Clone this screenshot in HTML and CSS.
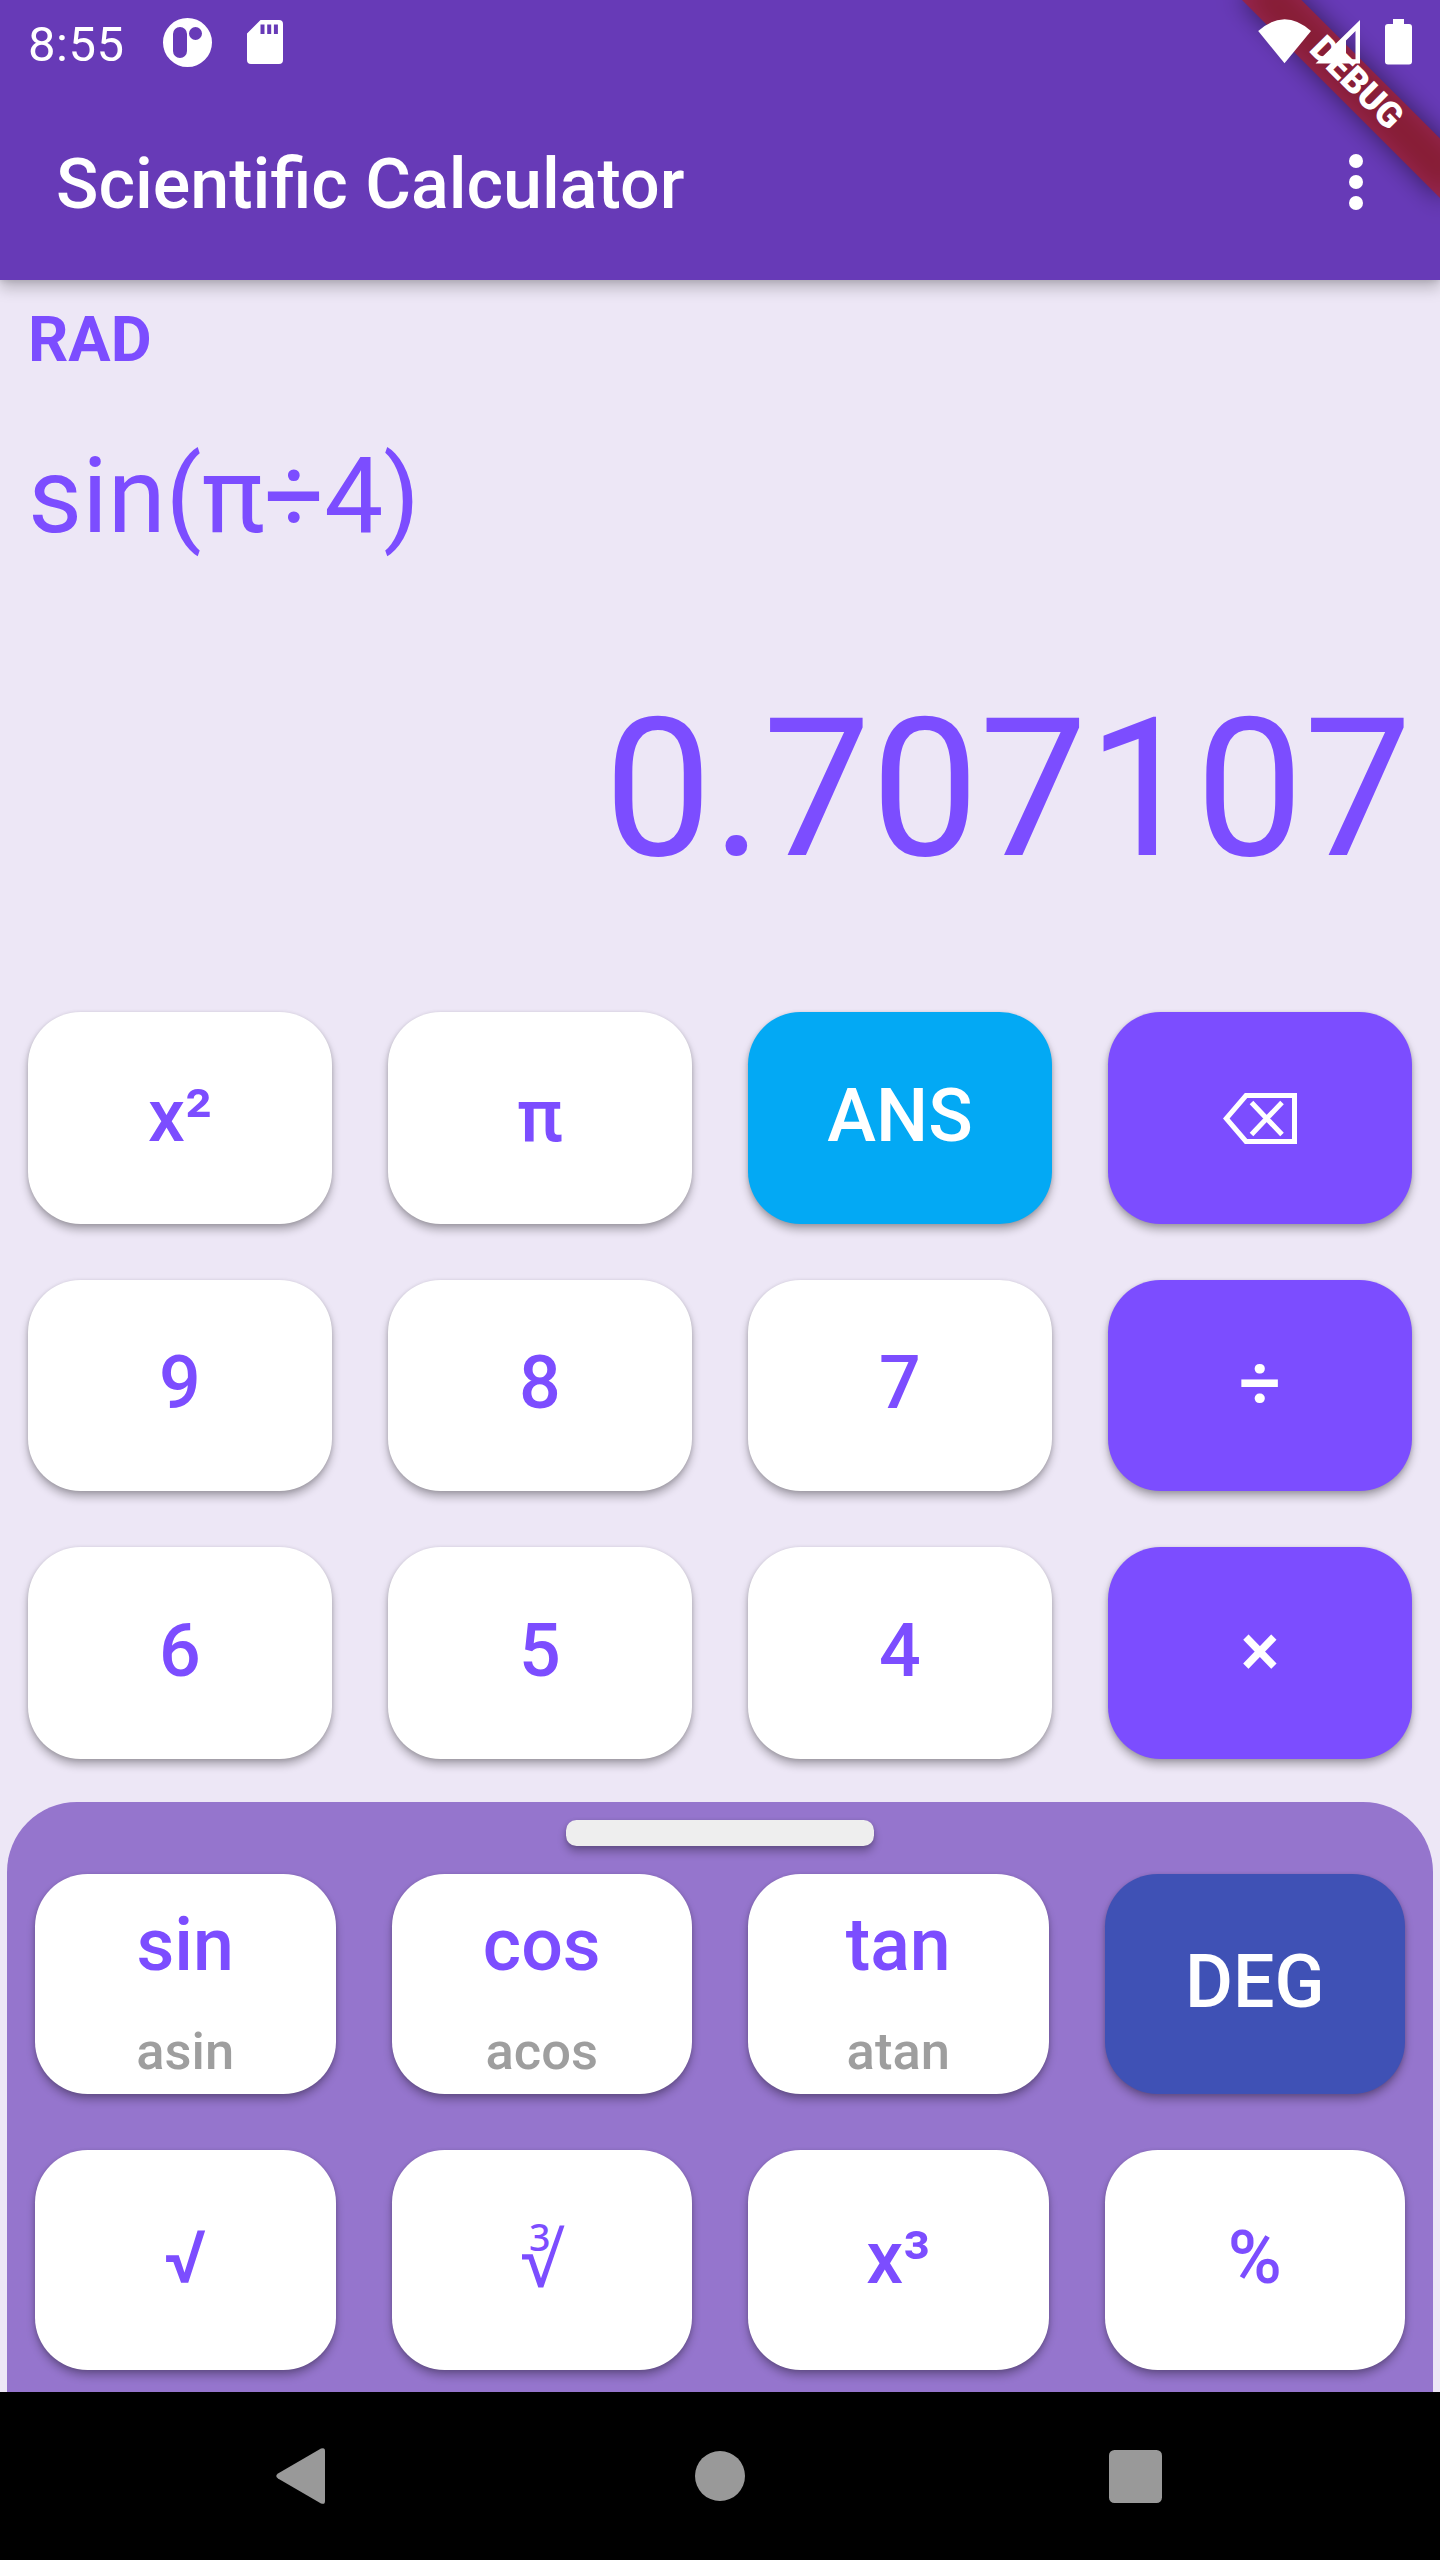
FILE: index.html
```html
<!DOCTYPE html>
<html lang="en">
<head>
<meta charset="utf-8">
<title>Scientific Calculator</title>
<link rel="stylesheet" href="styles.css">
</head>
<body>
<div class="screen">
  <header class="top">
    <div class="status">
      <span class="clock">8:55</span>
      <svg class="status-app" width="49" height="49" viewBox="0 0 49 49"><path fill="#fff" fill-rule="evenodd" d="M24.5 0a24.5 24.5 0 1 1 0 49a24.5 24.5 0 1 1 0-49zM17 9a7 7 0 0 0-7 7v17a7 7 0 0 0 14 0V16a7 7 0 0 0-7-7zM32.500 9a6.500 6.500 0 1 0 0 13a6.500 6.500 0 1 0 0-13z"/></svg>
      <svg class="status-sd" width="36" height="44" viewBox="0 0 36 44"><path fill="#fff" fill-rule="evenodd" d="M13.500 0H32a4 4 0 0 1 4 4V40a4 4 0 0 1-4 4H4a4 4 0 0 1-4-4V13.500zM13.500 4.500V14h4V4.500zM20.200 4.500V14h4V4.500zM26.900 4.500V14h4V4.500z"/></svg>
    </div>
    <div class="appbar">
      <h1 class="title">Scientific Calculator</h1>
      <svg class="more" width="14" height="56" viewBox="0 0 14 56"><g fill="#fff"><circle cx="7" cy="7" r="7"/><circle cx="7" cy="28" r="7"/><circle cx="7" cy="49" r="7"/></g></svg>
    </div>
  </header>
  <section class="display">
    <div class="mode">RAD</div>
    <div class="expression">sin(π÷4)</div>
    <div class="result">0.707107</div>
  </section>
  <main class="keypad">
    <button class="key">x²</button>
    <button class="key">π</button>
    <button class="key answer">ANS</button>
    <button class="key operator" aria-label="Backspace"><svg class="backspace" width="74" height="51" viewBox="0 0 74 51"><path fill="none" stroke="#fff" stroke-width="5" d="M23 2.500H71.500V48.500H23L3.200 25.500zM28.500 9.500L59 41.500M59 9.500L28.500 41.500"/></svg></button>
    <button class="key">9</button>
    <button class="key">8</button>
    <button class="key">7</button>
    <button class="key operator">÷</button>
    <button class="key">6</button>
    <button class="key">5</button>
    <button class="key">4</button>
    <button class="key operator">×</button>
  </main>
  <section class="sheet">
    <div class="handle"></div>
    <div class="functions">
      <button class="key dual"><span>sin</span><span class="alt">asin</span></button>
      <button class="key dual"><span>cos</span><span class="alt">acos</span></button>
      <button class="key dual"><span>tan</span><span class="alt">atan</span></button>
      <button class="key degrees">DEG</button>
      <button class="key">√</button>
      <button class="key cube-root"><svg class="root" width="43" height="64" viewBox="0 0 43 64"><path fill="currentColor" d="M0 30.200H10.700L19 54.200L37.700 1.500H42.500L21.300 63.500H16.300L6.700 35.500H0z"/><text class="root-index" x="17.700" y="27" text-anchor="middle">3</text></svg></button>
      <button class="key">x³</button>
      <button class="key">%</button>
    </div>
  </section>
  <nav class="navbar">
    <svg width="49" height="56" viewBox="0 0 49 56"><path fill="#999" d="M45 .6Q49-1 49 3V53Q49 57 45 55.400L2 30.500Q-1.500 28 2 25.500z"/></svg>
    <svg class="home" width="50" height="50" viewBox="0 0 50 50"><circle cx="25" cy="25" r="25" fill="#999"/></svg>
    <svg width="53" height="53" viewBox="0 0 53 53"><rect width="53" height="53" rx="5.500" fill="#999"/></svg>
  </nav>
  <svg class="banner" width="300" height="280" viewBox="0 0 300 280">
    <defs><filter id="soft" x="-30%" y="-150%" width="160%" height="400%"><feGaussianBlur stdDeviation="12.600"/></filter></defs>
    <g transform="translate(300 0) rotate(45)">
      <rect x="-140" y="98" width="280" height="42" fill="#000" fill-opacity=".5" filter="url(#soft)"/>
      <rect x="-140" y="98" width="280" height="42" fill="#b71c1c" fill-opacity=".627"/>
      <text class="banner-text" x="-.300" y="129.300" text-anchor="middle">DEBUG</text>
    </g>
    <path fill="#fff" d="M118.200 31Q144.500 7.500 171 31L144.500 63.200z"/>
    <path fill="#fff" fill-rule="evenodd" d="M220 20V63.500H175.500zM215.500 31V59.300H206V40.500z"/>
    <path fill="#fff" d="M253 19H264V24H269A3 3 0 0 1 272 27V61.500A3 3 0 0 1 269 64.500H248A3 3 0 0 1 245 61.500V27A3 3 0 0 1 248 24H253z"/>
  </svg>
</div>
</body>
</html>
```
FILE: styles.css
```css
* { box-sizing: border-box; }
body { margin: 0; background: #ede7f6; font-family: Roboto, "Noto Sans", sans-serif; }
.screen {
  position: relative;
  display: flex;
  flex-direction: column;
  width: 1440px;
  height: 2560px;
  overflow: hidden;
  background: #ede7f6;
}
.top {
  height: 280px;
  background: #673ab7;
  color: #fff;
  box-shadow: 0 8px 14px rgba(0, 0, 0, .22), 0 1px 6px rgba(0, 0, 0, .12);
}
.status { display: flex; align-items: center; height: 84px; padding-left: 28px; }
.clock { width: 135px; padding-top: 5px; font-size: 49px; line-height: 60px; letter-spacing: .5px; }
.status-sd { margin-left: 35px; }
.appbar { display: flex; align-items: center; justify-content: space-between; height: 196px; padding: 0 77px 0 56px; }
.title { margin: 0; padding-top: 4px; font-size: 70px; font-weight: 500; line-height: 82px; }
.display { display: flex; flex-direction: column; height: 732px; padding: 23px 28px 0; color: #7c4dff; }
.mode { font-size: 63px; font-weight: 700; line-height: 74px; }
.expression { margin-top: 58px; font-size: 105px; line-height: 123px; }
.result { margin-top: 118px; font-size: 192.500px; line-height: 226px; text-align: right; }
.keypad {
  display: grid;
  grid-template-columns: repeat(4, 1fr);
  grid-auto-rows: 211.500px;
  gap: 56px;
  height: 790px;
  padding: 0 28px;
}
.key {
  display: flex;
  flex-direction: column;
  align-items: center;
  justify-content: center;
  padding: 0 0 4px;
  border: 0;
  border-radius: 52.500px;
  background: #fff;
  color: #7c4dff;
  font: 500 73.500px/86px Roboto, "Noto Sans", sans-serif;
  box-shadow: 0 6px 9px rgba(0, 0, 0, .27), 0 1px 4px rgba(0, 0, 0, .14);
}
.operator { background: #7c4dff; color: #fff; }
.answer { background: #03a9f4; color: #fff; }
.degrees { background: #3f51b5; color: #fff; }
.backspace { margin-top: 5px; }
.functions .key { padding-bottom: 5px; }
.functions .cube-root { padding: 0 0 8px 3px; }
.root { overflow: visible; }
.root-index { fill: currentColor; font: 500 37.500px "Noto Sans", sans-serif; }
.functions .dual { gap: 32px; padding: 16px 0 0; }
.alt { color: #9e9e9e; font-size: 52.500px; line-height: 62px; }
.sheet {
  display: flex;
  flex-direction: column;
  height: 590px;
  margin: 0 7px;
  padding: 17.500px 28px 0;
  border-radius: 70px 70px 0 0;
  background: #9575cd;
}
.handle {
  align-self: center;
  width: 308px;
  height: 26.500px;
  border-radius: 10.500px;
  background: #eee;
  box-shadow: 0 6px 9px rgba(0, 0, 0, .27), 0 1px 4px rgba(0, 0, 0, .14);
}
.functions {
  display: grid;
  grid-template-columns: repeat(4, 1fr);
  grid-auto-rows: 220px;
  gap: 56px;
  margin-top: 28px;
}
.navbar {
  position: relative;
  display: flex;
  align-items: center;
  justify-content: space-between;
  height: 168px;
  padding: 0 278.500px 0 276px;
  background: #000;
}
.home { margin-left: 6px; }
.banner { position: absolute; top: 0; right: 0; }
.banner-text { fill: #fff; font: 900 35.700px Roboto, sans-serif; }
```
